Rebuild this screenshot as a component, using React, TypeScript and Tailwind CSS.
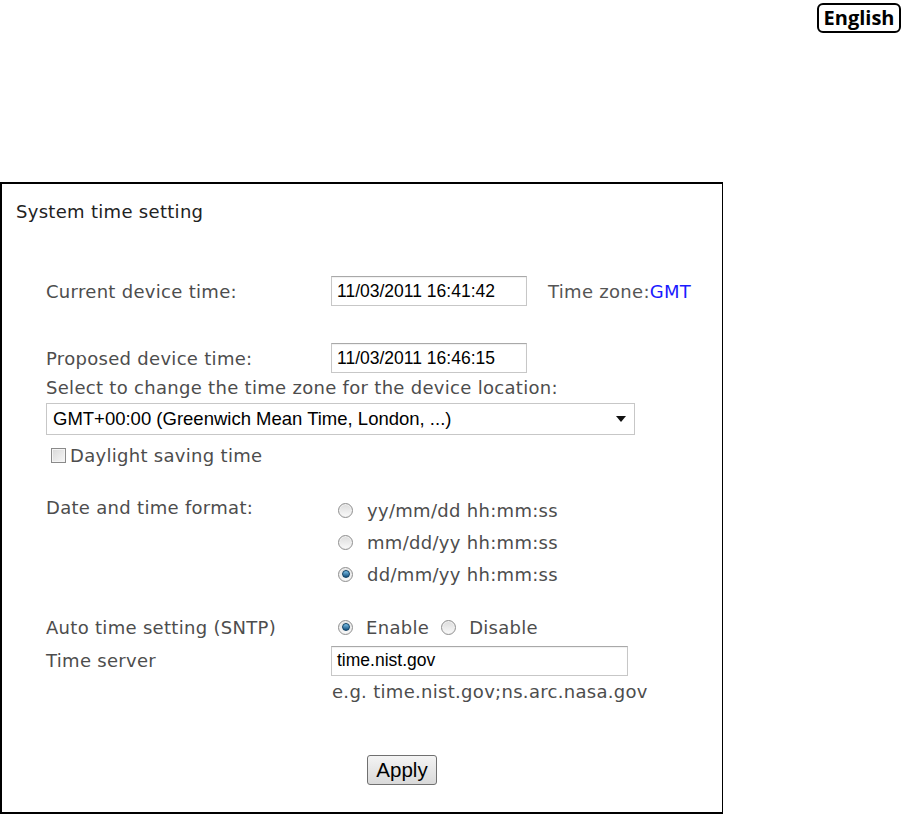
import * as React from "react"

const Radio: React.FC<{ checked?: boolean }> = ({ checked }) => {
    return (
        <span className="inline-flex items-center justify-center w-[15px] h-[15px] rounded-full border border-[#8f8f8f] bg-gradient-to-b from-[#dcdcdc] to-[#fafafa] shadow-[inset_0_0_0_1px_#f0f0f0] shrink-0">
            {checked && (
                <span className="w-[8px] h-[8px] rounded-full bg-gradient-to-b from-[#7fc4ea] to-[#11507e] border border-[#0e3f63]" />
            )}
        </span>
    )
}

const TextBox: React.FC<{ value: string; w: string }> = ({ value, w }) => {
    return (
        <div className={`${w} h-[30px] border border-[#c7c7c7] border-t-[#a9a9a9] bg-white flex items-center px-[5px] text-[17.5px] tracking-normal text-black font-['Liberation_Sans',Arial,sans-serif] shadow-[inset_0_1px_1px_rgba(0,0,0,0.06)]`}>
            {value}
        </div>
    )
}

const App: React.FC<{}> = () => {
    const [format, setFormat] = React.useState(2)
    const [sntp, setSntp] = React.useState(true)
    const formats = ["yy/mm/dd hh:mm:ss", "mm/dd/yy hh:mm:ss", "dd/mm/yy hh:mm:ss"]
    return (
        <div className="w-[918px] h-[814px] bg-white overflow-hidden font-['DejaVu_Sans',Verdana,sans-serif] text-[18px] tracking-[0.3px] text-[#4d4d4d]">
            <div className="flex justify-end pr-[17px] pt-[3px]">
                <button className="w-[84px] h-[30px] border-2 border-black rounded-[6px] flex items-center justify-center font-['Open_Sans',sans-serif] font-bold text-[20px] tracking-normal text-black leading-none">
                    English
                </button>
            </div>
            <div className="mt-[149px] w-[723px] h-[632px] border-2 border-r border-black flex flex-col">
                <p className="mt-[16px] ml-[14px] h-[24px] leading-[24px] text-[#222]">System time setting</p>

                <div className="pl-[44px] flex flex-col">
                    <div className="mt-[52px] flex items-center h-[30px]">
                        <p className="w-[285px]">Current device time:</p>
                        <TextBox value="11/03/2011 16:41:42" w="w-[196px]" />
                        <p className="ml-[21px] text-[#555]">Time zone:<span className="text-[#1a1aff]">GMT</span></p>
                    </div>

                    <div className="mt-[37px] flex items-center h-[30px]">
                        <p className="w-[285px]">Proposed device time:</p>
                        <TextBox value="11/03/2011 16:46:15" w="w-[196px]" />
                    </div>

                    <p className="mt-[4px] h-[22px] leading-[22px]">Select to change the time zone for the device location:</p>

                    <div className="mt-[4px] w-[589px] h-[32px] border border-[#c7c7c7] bg-white flex items-center justify-between pl-[6px] pr-[8px] font-['Liberation_Sans',Arial,sans-serif] text-[18.5px] tracking-normal text-black">
                        <span>GMT+00:00 (Greenwich Mean Time, London, ...)</span>
                        <svg width="10" height="6" viewBox="0 0 10 6"><path d="M0 0 L10 0 L5 6 Z" fill="#111" /></svg>
                    </div>

                    <div className="mt-[9px] h-[22px] flex items-center pl-[5px]">
                        <span className="w-[15px] h-[15px] border border-[#8a8a8a] bg-gradient-to-br from-[#d8d8d8] to-[#f7f7f7] shadow-[inset_0_0_0_1px_#f4f4f4]" />
                        <span className="ml-[4px]">Daylight saving time</span>
                    </div>

                    <div className="mt-[28px] flex items-start">
                        <p className="w-[292px] h-[28px] leading-[28px]">Date and time format:</p>
                        <div className="flex flex-col">
                            {formats.map((f, i) => (
                                <div key={f} className="h-[32px] flex items-center cursor-pointer" onClick={() => setFormat(i)}>
                                    <Radio checked={format === i} />
                                    <span className="ml-[14px]">{f}</span>
                                </div>
                            ))}
                        </div>
                    </div>

                    <div className="mt-[22px] flex items-center h-[30px]">
                        <p className="w-[292px]">Auto time setting (SNTP)</p>
                        <div className="flex items-center cursor-pointer" onClick={() => setSntp(true)}>
                            <Radio checked={sntp} />
                            <span className="ml-[13px]">Enable</span>
                        </div>
                        <div className="ml-[12px] flex items-center cursor-pointer" onClick={() => setSntp(false)}>
                            <Radio checked={!sntp} />
                            <span className="ml-[13px]">Disable</span>
                        </div>
                    </div>

                    <div className="mt-[3px] flex items-center h-[31px]">
                        <p className="w-[285px]">Time server</p>
                        <TextBox value="time.nist.gov" w="w-[297px]" />
                    </div>

                    <p className="mt-[5px] ml-[286px] h-[22px] leading-[22px]">e.g. time.nist.gov;ns.arc.nasa.gov</p>
                </div>

                <div className="mt-[52px] pl-[365px]">
                    <button className="w-[70px] h-[30px] border border-[#707070] rounded-[3px] bg-gradient-to-b from-[#f4f4f4] to-[#d9d9d9] font-['Liberation_Sans',Arial,sans-serif] text-[20.5px] leading-none tracking-normal text-black">
                        Apply
                    </button>
                </div>
            </div>
        </div>
    )
}

export default App
